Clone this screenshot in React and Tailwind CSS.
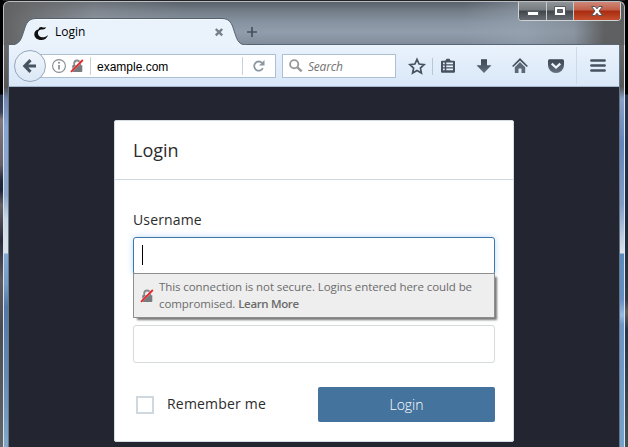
import React from "react";

function BlockedLock({ className }) {
  return (
    <svg className={className} width="14" height="14" viewBox="0 0 14 14">
      <path d="M4.2 7V4.5a3 3 0 0 1 6 0V7" fill="none" stroke="#85898c" strokeWidth="1.8" />
      <path d="M2.3 6.2h10v6a.8.8 0 0 1-.8.8H3.1a.8.8 0 0 1-.8-.8z" fill="#767b7e" />
      <path d="M.8 13 12.6 1.2" stroke="#fff" strokeWidth="2.4" opacity=".6" />
      <path d="M1 12.8 12.8 1" stroke="#e3262b" strokeWidth="1.8" />
    </svg>
  );
}

function TitleBar() {
  return (
    <header className="relative h-[44px] shrink-0 overflow-hidden rounded-t-[6px] border border-b-0 border-[#b9bec4] bg-[linear-gradient(90deg,rgba(96,96,96,.95)_0,rgba(105,105,105,.8)_25px,rgba(150,152,155,.35)_90px,rgba(150,160,172,0)_180px,rgba(120,130,140,0)_460px,rgba(152,165,178,.5)_520px,rgba(130,138,146,.4)_570px,rgba(90,90,90,.9)_600px,rgba(92,92,92,.95)_622px),linear-gradient(180deg,#59616a_0,#737d88_9px,#8793a1_20px,#919dac_30px,#8793a1_38px,#7d8997_44px)]">
      <div className="absolute bottom-0 left-[242px] right-[5px] h-px bg-[#596675]" />
      <svg className="absolute left-[4px] top-0" width="252" height="43" viewBox="8 2 252 43">
        <path d="M8 47V45.5c8 0 12-3 14-9l3-9c2-6 5-9 11-9h186c6 0 9 3 11 9l3 9c2 6 5 8.5 11 8.5h13v2z" fill="#eaf2fc" stroke="#55616f" strokeWidth="1" />
        <path d="M36 19.5h186" stroke="#f5faff" />
        <path d="M38.6 29.2c.3-1.6 1.8-2.5 3.5-2 1.5.5 2.6.4 4-.2-.6 1.8-1.9 2.7-3.7 2.5-2.8-.3-4.5 1.4-4.5 3.6 0 2.6 2 4.2 4.6 4.2 2 0 3.9-.7 5.6-2.3-.9 3.1-3.5 5.1-6.9 5.1-4 0-6.9-2.4-6.9-5.8 0-2.5 1.6-4.4 4.3-5.1z" fill="#111" />
        <path d="m215.8 29 6.4 6.4m0-6.4-6.4 6.4" stroke="#74808a" strokeWidth="2.4" />
        <path d="M247 32h10M252 27v10" stroke="#45505d" strokeWidth="1.7" />
      </svg>
      <span className="absolute left-[51px] top-[21px] text-xs leading-[18px] text-black">Login</span>
      <div className="absolute right-[3px] -top-px flex h-[20px] w-[103px] overflow-hidden rounded-b-[4px] border border-t-0 border-[#d0d2d4] bg-[#303337]">
        <div className="flex w-[28px] items-center justify-center border-r border-[#c8cbce] bg-[linear-gradient(180deg,#92979b_0,#777c81_9px,#3f4549_10px,#62686d_18px)]">
          <svg width="14" height="12" viewBox="0 0 14 12"><path d="M1.5 6.5h11v4h-11z" fill="#fff" stroke="#545a60" /></svg>
        </div>
        <div className="flex w-[27px] items-center justify-center border-r border-[#c8cbce] bg-[linear-gradient(180deg,#92979b_0,#777c81_9px,#3f4549_10px,#62686d_18px)]">
          <svg width="14" height="12" viewBox="0 0 14 12"><path d="M1.5 1.5h11v9h-11z" fill="#fff" stroke="#545a60" /><path d="M4.5 4.5h5v3h-5z" fill="#63686d" stroke="#545a60" /></svg>
        </div>
        <div className="flex grow items-center justify-center bg-[linear-gradient(180deg,#d08c7d_0,#c05f49_9px,#a92b10_10px,#c24b2b_18px)]">
          <svg width="14" height="12" viewBox="0 0 14 12"><path d="M1.5 1.5h3.6L7 3.8l1.9-2.3h3.6L9 6l3.5 4.5H8.9L7 8.2l-1.9 2.3H1.5L5 6z" fill="#fff" stroke="#59545a" /></svg>
        </div>
      </div>
    </header>
  );
}

function Toolbar() {
  return (
    <nav className="flex h-[42px] shrink-0 items-center border-b border-[#a3b8cd] bg-gradient-to-b from-[#eaf2fc] to-[#d9e8f8]">
      <div className="z-10 ml-[5px] flex h-8 w-8 shrink-0 items-center justify-center rounded-full border border-[#94a7bd] bg-gradient-to-b from-[#eff5fc] to-[#dce8f5]">
        <svg width="16" height="16" viewBox="0 0 16 16"><path d="M14 8H3.5M8.5 2.2 2.8 8l5.7 5.8" fill="none" stroke="#47535f" strokeWidth="3.1" /></svg>
      </div>
      <div className="-ml-[8px] flex h-6 w-[238px] shrink-0 items-center border border-[#adbfd2] bg-white pl-[12px]">
        <svg className="shrink-0" width="16" height="16" viewBox="0 0 16 16">
          <circle cx="8" cy="8" r="6.4" fill="none" stroke="#858b90" strokeWidth="1.1" />
          <path d="M8 7v4.4" stroke="#858b90" strokeWidth="1.7" /><circle cx="8" cy="4.7" r="1" fill="#858b90" />
        </svg>
        <BlockedLock className="ml-[3px] shrink-0" />
        <div className="ml-[6px] h-[18px] w-px bg-[#cbd0d5]" />
        <span className="ml-[6px] grow pt-[2px] text-xs text-black [font-family:'Liberation_Sans',sans-serif]">example.com</span>
        <div className="h-[18px] w-px bg-[#c8d2dc]" />
        <svg className="mx-[8px] shrink-0" width="16" height="16" viewBox="0 0 16 16">
          <path d="M11.9 10.2A4.6 4.6 0 1 1 11.2 5" fill="none" stroke="#8b98a2" strokeWidth="1.8" /><path d="M13.5 2v5.5H8z" fill="#8b98a2" />
        </svg>
      </div>
      <div className="ml-[6px] flex h-6 w-[114px] shrink-0 items-center border border-[#adbfd2] bg-white pl-[5px]">
        <svg width="16" height="16" viewBox="0 0 16 16"><circle cx="6.2" cy="6.2" r="4.1" fill="none" stroke="#999" strokeWidth="1.9" /><path d="m9.4 9.4 4.3 4" stroke="#999" strokeWidth="2.5" /></svg>
        <span className="ml-[4px] pt-[2px] text-xs italic tracking-[-0.2px] text-[#737373]">Search</span>
      </div>
      <svg className="shrink-0" width="224" height="40" viewBox="396 46 224 40" fill="none">
        <defs><linearGradient id="metal" x1="0" y1="0" x2="0" y2="1"><stop stopColor="#3b4652" /><stop offset="1" stopColor="#64707d" /></linearGradient></defs>
        <path d="m417 59.4 2.1 4.6 5 .6-3.7 3.4 1 5-4.4-2.5-4.4 2.5 1-5-3.7-3.4 5-.6z" stroke="#46525f" strokeWidth="1.7" />
        <path d="M432.5 58v17" stroke="#b8c6d5" />
        <path d="M442 60.8h3.2l1.4-2h2.8l1.4 2h3.2q1 0 1 1v10q0 1-1 1h-12q-1 0-1-1v-10q0-1 1-1z" fill="#46525f" />
        <path d="M443 63.4h1.7m1.6 0h6.7M443 66.4h1.7m1.6 0h6.7M443 69.4h1.7m1.6 0h6.7" stroke="#e6f0fb" strokeWidth="1.8" />
        <path d="M481 59.3h6v6h4.5L484 73l-7.5-7.7h4.5z" fill="url(#metal)" />
        <path d="m512.7 66.5 7.3-7.2 7.3 7.2" stroke="#46525f" strokeWidth="1.7" />
        <path d="m514.8 67.2 5.2-5.1 5.2 5.1V73h-3.7v-4.5h-3V73h-3.7z" fill="#5c6875" />
        <path d="M549.5 59.3h13q1.5 0 1.5 1.5v4.2a8 8 0 0 1-16 0v-4.2q0-1.5 1.5-1.5z" fill="url(#metal)" />
        <path d="m551.7 63.6 4.3 4 4.3-4" stroke="#eef5fc" strokeWidth="2.2" />
        <path d="M576.5 47v37" stroke="#cbd9e8" />
        <path d="M591.4 60.5h13.2m-13.2 5h13.2m-13.2 5h13.2" stroke="#46525f" strokeWidth="2.6" strokeLinecap="round" />
      </svg>
    </nav>
  );
}

function LoginCard() {
  return (
    <section className="h-[322px] w-[400px] rounded-[2px] border border-[#d4dce3] bg-white text-[#2b2b2b]">
      <div className="flex h-[59px] items-center border-b border-[#d0d8df] pl-[18px] text-lg">Login</div>
      <form className="px-[18px] pt-[30px]">
        <label className="block text-sm leading-5 tracking-[0.15px]">Username</label>
        <div className="relative mt-[7px] flex h-[38px] items-center rounded-[3px] border border-[#3d75ac] bg-white pl-[8px] shadow-[0_0_6px_#bddaf5]">
          <div className="mb-[2px] h-[20px] w-px bg-black" />
          <div className="absolute -left-px top-[35px] flex h-[45px] w-[362px] items-center border border-[#8e8e8e] bg-[#eee] pl-[6px] text-[#6b6b6b] shadow-[3px_3px_2px_-1px_#777]">
            <BlockedLock className="shrink-0" />
            <p className="mb-[2px] ml-[5px] whitespace-nowrap text-[11.5px] leading-[17px] tracking-[-0.08px]">This connection is not secure. Logins entered here could be<br />compromised. <b className="font-semibold tracking-[-0.35px]">Learn More</b></p>
          </div>
        </div>
        <div className="mt-[50px] h-[38px] rounded-[3px] border border-[#d5dadd] bg-white" />
        <div className="mt-[24px] flex items-center">
          <div className="ml-[3px] h-[18px] w-[18px] border-2 border-[#cfd8df]" />
          <span className="mb-[2px] ml-[13px] grow text-sm leading-5 tracking-[0.2px]">Remember me</span>
          <div className="flex h-[35px] w-[177px] items-center justify-center rounded-[2px] bg-[#44739d] text-sm font-light text-white">Login</div>
        </div>
      </form>
    </section>
  );
}

export default function App() {
  return (
    <div className="flex h-[447px] w-[628px] overflow-hidden bg-black [font-family:'Open_Sans',sans-serif]">
      <div className="w-[3px] shrink-0 bg-[linear-gradient(180deg,#000_94px,#26344f_95px,#3b4256_112px,#807b80_120px,#65606a_165px,#242a3d_180px,#1c2438_190px,#676167_205px,#292b3b_240px,#5d5a61_280px,#4a4c52_330px,#62676a_447px)]" />
      <div className="flex w-[622px] shrink-0 flex-col border-t border-[#222]">
        <TitleBar />
        <div className="flex h-[402px]">
          <div className="w-[6px] shrink-0 border-l border-r border-l-[#d7e4ee] border-r-[#647789] bg-[linear-gradient(180deg,#686868_0,#555_42px,#7186ad_54px,#87a5d5_82px,#8fa8c9_150px,#cbd7e4_174px,#dce4eb_208px,#83a8d3_209px,#759ac6_240px,#5278a5_262px,#6489b5_330px,#82a8c9_402px)]" />
          <div className="w-[610px] shrink-0">
            <Toolbar />
            <main className="flex h-[360px] justify-center bg-[#232630] pt-[33px]">
              <LoginCard />
            </main>
          </div>
          <div className="w-[6px] shrink-0 border-l border-r border-l-[#647789] border-r-[#dce9f1] bg-[linear-gradient(180deg,#686868_0,#555_42px,#8ba1c8_54px,#6485bb_98px,#829dc7_160px,#dce4ed_208px,#5a8bbc_209px,#6590c1_255px,#98bbe1_270px,#6b95c4_280px,#76a3cc_402px)]" />
        </div>
      </div>
      <div className="w-[3px] shrink-0 bg-[linear-gradient(180deg,#000_94px,#26344f_95px,#1c2b40_230px,#343946_300px,#655e5d_312px,#26334a_330px,#455052_447px)]" />
    </div>
  );
}
